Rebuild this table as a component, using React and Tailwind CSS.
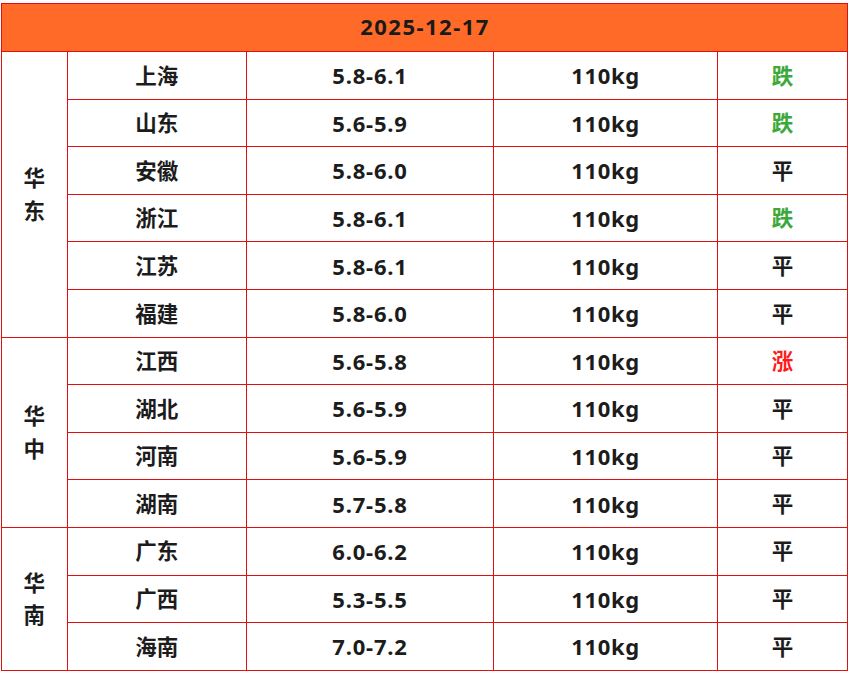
import React from 'react';

const groups = [
  {
    region: ['华', '东'],
    rows: [
      ['上海', '5.8-6.1', '110kg', '跌'],
      ['山东', '5.6-5.9', '110kg', '跌'],
      ['安徽', '5.8-6.0', '110kg', '平'],
      ['浙江', '5.8-6.1', '110kg', '跌'],
      ['江苏', '5.8-6.1', '110kg', '平'],
      ['福建', '5.8-6.0', '110kg', '平'],
    ],
  },
  {
    region: ['华', '中'],
    rows: [
      ['江西', '5.6-5.8', '110kg', '涨'],
      ['湖北', '5.6-5.9', '110kg', '平'],
      ['河南', '5.6-5.9', '110kg', '平'],
      ['湖南', '5.7-5.8', '110kg', '平'],
    ],
  },
  {
    region: ['华', '南'],
    rows: [
      ['广东', '6.0-6.2', '110kg', '平'],
      ['广西', '5.3-5.5', '110kg', '平'],
      ['海南', '7.0-7.2', '110kg', '平'],
    ],
  },
];

const trendColor = (t) => {
  if (t === '跌') return 'text-[#3da83a]';
  if (t === '涨') return 'text-[#ff1a1a]';
  return 'text-[#1c1c1c]';
};

const cell = 'border border-[#e01010] h-[47.6px] p-0 text-center align-middle';

const App = () => {
  return (
    <div
      className="w-[850px] h-[673px] bg-white overflow-hidden pt-[3px] pl-[1px]"
      style={{ fontFamily: '"Noto Sans", "Noto Sans CJK SC", sans-serif' }}
    >
      <table className="border-collapse table-fixed w-[846px] text-[21.5px] font-bold text-[#1c1c1c] leading-none">
        <colgroup>
          <col className="w-[65.5px]" />
          <col className="w-[179.5px]" />
          <col className="w-[247px]" />
          <col className="w-[224px]" />
          <col className="w-[130px]" />
        </colgroup>
        <thead>
          <tr>
            <th colSpan={5} className="border border-[#e01010] bg-[#ff6a28] h-[48px] p-0 pb-[4px] pl-[1px] text-center align-middle font-bold text-[22px] tracking-[1.5px] text-[#1a1a1a]">
              2025-12-17
            </th>
          </tr>
        </thead>
        <tbody>
          {groups.map((g) =>
            g.rows.map((r, i) => (
              <tr key={g.region.join('') + r[0]}>
                {i === 0 && (
                  <td rowSpan={g.rows.length} className="border border-[#e01010] p-0 text-center align-middle">
                    <div className="flex flex-col items-center gap-[11px]">
                      <span>{g.region[0]}</span>
                      <span>{g.region[1]}</span>
                    </div>
                  </td>
                )}
                <td className={cell}>{r[0]}</td>
                <td className={`${cell} text-[22px] tracking-[0.8px]`}>{r[1]}</td>
                <td className={`${cell} text-[22px] tracking-[0.6px]`}>{r[2]}</td>
                <td className={`${cell} ${trendColor(r[3])}`}>{r[3]}</td>
              </tr>
            ))
          )}
        </tbody>
      </table>
    </div>
  );
};

export default App;
